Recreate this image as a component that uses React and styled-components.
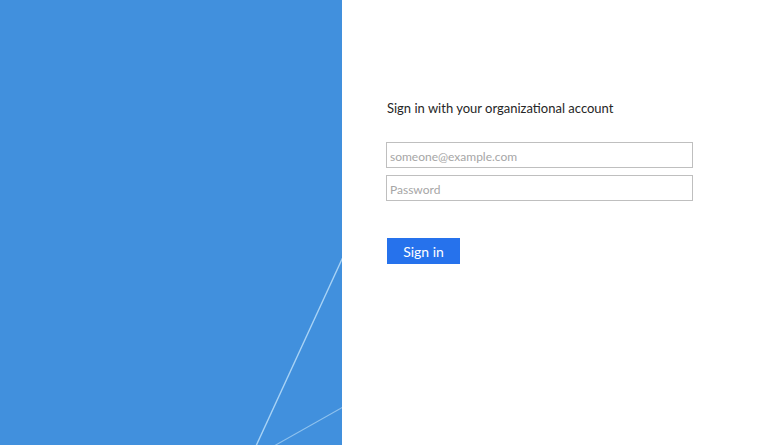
import React from 'react';
import styled, { createGlobalStyle } from 'styled-components';

const GlobalStyle = createGlobalStyle`
  html, body {
    margin: 0;
    padding: 0;
    background: #fff;
  }
  body {
    font-family: Lato, 'Open Sans', sans-serif;
  }
`;

const App = () => {
  return (
    <Page>
      <GlobalStyle />
      <Illustration>
        <Lines viewBox="0 0 342 445" preserveAspectRatio="none">
          <line x1="343" y1="257" x2="256" y2="446" stroke="#a9d3f5" strokeWidth="1.4" />
          <line x1="343" y1="407" x2="274" y2="446" stroke="#8fc2ee" strokeWidth="1.1" />
        </Lines>
      </Illustration>
      <Content>
        <Form>
          <Header>Sign in with your organizational account</Header>
          <Fields>
            <TextInput type="email" placeholder="someone@example.com" />
            <TextInput type="password" placeholder="Password" />
          </Fields>
          <SubmitButton type="button">Sign in</SubmitButton>
        </Form>
      </Content>
    </Page>
  );
};

const Page = styled.div`
  display: flex;
  width: 780px;
  height: 445px;
  overflow: hidden;
`;

const Illustration = styled.div`
  flex: 0 0 342px;
  height: 100%;
  background: #4190dd;
`;

const Lines = styled.svg`
  display: block;
  width: 100%;
  height: 100%;
`;

const Content = styled.div`
  flex: 1;
  padding: 99px 0 0 44px;
`;

const Form = styled.div`
  display: flex;
  flex-direction: column;
  width: 307px;
`;

const Header = styled.div`
  font-size: 13px;
  line-height: 18px;
  color: #262626;
  margin-left: 1px;
`;

const Fields = styled.div`
  display: flex;
  flex-direction: column;
  gap: 7px;
  margin-top: 25px;
`;

const TextInput = styled.input`
  box-sizing: border-box;
  width: 307px;
  height: 26px;
  margin: 0;
  padding: 4px 3px 2px;
  border: 1px solid #bfbfbf;
  font-family: inherit;
  font-size: 12px;
  color: #262626;
  outline: none;

  &::placeholder {
    color: #a6a6a6;
  }
`;

const SubmitButton = styled.button`
  align-self: flex-start;
  width: 73px;
  height: 26px;
  margin: 37px 0 0 1px;
  padding: 0;
  border: none;
  background: #2672ec;
  color: #fff;
  font-family: inherit;
  font-size: 14px;
  cursor: pointer;
`;

export default App;
